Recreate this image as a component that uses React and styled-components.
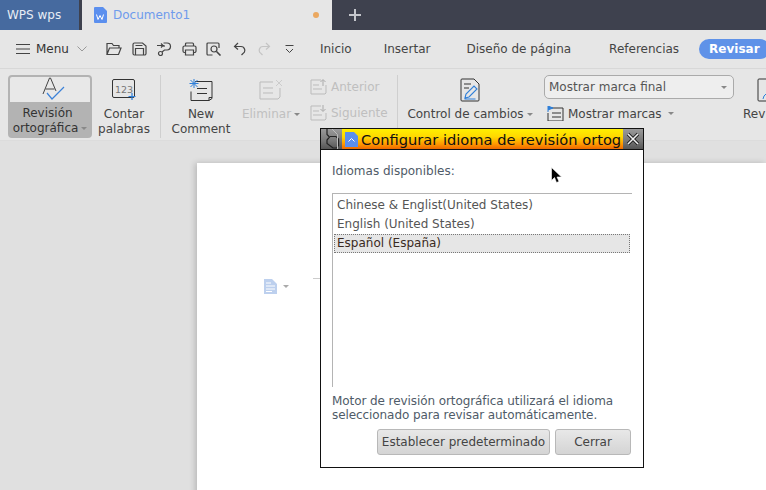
import React from 'react';
import styled, { createGlobalStyle } from 'styled-components';

const GlobalStyle = createGlobalStyle`
  html, body { margin: 0; padding: 0; background: #e0e0e0; }
  body { font-family: "DejaVu Sans", sans-serif; font-size: 12px; }
`;

const stroke = { fill: 'none', stroke: 'currentColor', strokeWidth: 1.2 };

const Icon = ({ w = 16, h = 16, children }) => (
  <svg width={w} height={h} viewBox={`0 0 ${w} ${h}`} style={{ display: 'block', flex: 'none' }}>
    {children}
  </svg>
);

export default function App() {
  return (
    <Screen>
      <GlobalStyle />
      <TabBar>
        <HomeTab>WPS wps</HomeTab>
        <DocTab>
          <Icon w={14} h={16}>
            <path d="M1 1a1 1 0 0 1 1-1h8l4 4v11a1 1 0 0 1-1 1H2a1 1 0 0 1-1-1z" fill="#5b8fee" />
            <path d="M3.500 7.500l1.500 5 2-4 2 4 1.500-5" fill="none" stroke="#fff" strokeWidth="1" />
          </Icon>
          <DocName>Documento1</DocName>
          <Dot />
        </DocTab>
        <PlusTab>
          <Icon w={14} h={14}>
            <path d="M7 1v12M1 7h12" stroke="#c4c6cc" strokeWidth="2" />
          </Icon>
        </PlusTab>
      </TabBar>

      <MenuBar>
        <Hamburger>
          <Icon w={14} h={12}>
            <path d="M0 1.500h14M0 6h14M0 10.500h14" stroke="#444" strokeWidth="1" />
          </Icon>
        </Hamburger>
        <MenuLabel>Menu</MenuLabel>
        <Icon w={10} h={6}>
          <path d="M.5.500L5 5 9.500.5" fill="none" stroke="#999" />
        </Icon>
        <MenuDivider />
        <QuickTools>
          <Tool>
            <Icon w={16} h={14}>
              <path d="M1 12.500V1.500h5l1.500 2H13v2.500M1 12.500L3.500 6H15l-2.500 6.500z" {...stroke} />
            </Icon>
          </Tool>
          <Tool>
            <Icon w={15} h={14}>
              <path d="M1 2.500a1.500 1.500 0 0 1 1.500-1.500h8l3.500 3v7.500a1.500 1.500 0 0 1-1.500 1.500h-10A1.500 1.500 0 0 1 1 11.500zM3.500 13V6.500h8V13M3.500 3.500h7" {...stroke} />
            </Icon>
          </Tool>
          <Tool>
            <Icon w={15} h={14}>
              <path d="M0 3.500h6M4 1.500l2 2-2 2M6.500 1h3.500a3.500 3.500 0 0 1 0 7H7.500L5 10M7 3v2" {...stroke} />
              <circle cx="3.500" cy="11.500" r="2" {...stroke} />
            </Icon>
          </Tool>
          <Tool>
            <Icon w={15} h={14}>
              <path d="M3.500 4V2a1 1 0 0 1 1-1h6a1 1 0 0 1 1 1v2M3.500 10.500H2.500A1.500 1.500 0 0 1 1 9V5.500A1.500 1.500 0 0 1 2.500 4h10A1.500 1.500 0 0 1 14 5.500V9a1.500 1.500 0 0 1-1.500 1.500h-1M3.500 8h8v5h-8z" {...stroke} />
            </Icon>
          </Tool>
          <Tool>
            <Icon w={16} h={14}>
              <path d="M6.500 13H2a1 1 0 0 1-1-1V2a1 1 0 0 1 1-1h10a1 1 0 0 1 1 1v4" {...stroke} />
              <circle cx="8" cy="7" r="3" {...stroke} />
              <path d="M10.500 9.500L14.500 13.500" {...stroke} strokeWidth="1.600" />
            </Icon>
          </Tool>
          <Tool>
            <Icon w={13} h={14}>
              <path d="M5 1L1.500 4.500 5 7.500M1.500 4.500H8a3.800 3.800 0 0 1 2 7l-1.500 1.500" {...stroke} />
            </Icon>
          </Tool>
          <Tool $off>
            <Icon w={13} h={14}>
              <path d="M8 1l3.500 3.500L8 7.500M11.500 4.500H5a3.800 3.800 0 0 0-2 7L4.500 13" {...stroke} />
            </Icon>
          </Tool>
          <Tool>
            <Icon w={9} h={9}>
              <path d="M.5.500h8M1 4l3.500 3.500L8 4" {...stroke} strokeWidth="1" />
            </Icon>
          </Tool>
        </QuickTools>
        <Nav>
          <NavItem>Inicio</NavItem>
          <NavItem $gap={32}>Insertar</NavItem>
          <NavItem $gap={36}>Diseño de página</NavItem>
          <NavItem $gap={38}>Referencias</NavItem>
          <ActiveNavItem>Revisar</ActiveNavItem>
        </Nav>
      </MenuBar>

      <Ribbon>
        <SpellButton>
          <SpellTop>
            <Icon w={24} h={24}>
              <path d="M1 17L7.500 1h1L14 14M3.500 12h9" fill="none" stroke="#444" strokeWidth="1" />
              <path d="M5 16l5 6L22 10" fill="none" stroke="#3c82d8" strokeWidth="1.200" />
            </Icon>
          </SpellTop>
          <SpellLabel>
            <SpellFirstLine>Revisión</SpellFirstLine>
            ortográfica<Caret />
          </SpellLabel>
        </SpellButton>

        <BigTool $w={64}>
          <BigIcon>
            <Icon w={24} h={22}>
              <rect x=".5" y=".5" width="22" height="18" rx="1.500" fill="none" stroke="#333" />
              <text x="3" y="14" fontSize="9.500" fill="#777" fontFamily="DejaVu Sans">123</text>
              <path d="M20 14v7M16.500 17.500h7" stroke="#2f7fd8" strokeWidth="1.200" />
            </Icon>
          </BigIcon>
          <BigLabel>Contar<br />palabras</BigLabel>
        </BigTool>

        <RibbonDivider />

        <BigTool $w={74}>
          <BigIcon>
            <Icon w={24} h={22}>
              <path d="M6 2.500h17v17l-3 2H2v-9M20 21.500v-3h3M8 9.500h10M8 14.500h10" fill="none" stroke="#333" />
              <path d="M5 0v9M.5 4.500h9M1.500 1l7 7M8.500 1l-7 7" stroke="#2f7fd8" strokeWidth="1" />
            </Icon>
          </BigIcon>
          <BigLabel>New<br />Comment</BigLabel>
        </BigTool>

        <BigTool $w={66} $off>
          <BigIcon>
            <Icon w={24} h={22}>
              <path d="M14 3H1v17h18l2-2V9M4 9h10M4 14h10" fill="none" stroke="#bbb" />
              <path d="M17 1l6 6M23 1l-6 6" stroke="#ccc" />
            </Icon>
          </BigIcon>
          <BigLabel>Eliminar<Caret /></BigLabel>
        </BigTool>

        <StackTools>
          <StackItem>
            <Icon w={17} h={16}>
              <path d="M11 1H1v14h14l1-1V6M3 6h6M3 10h9" fill="none" stroke="#bbb" />
              <path d="M13 7V1M10.500 3L13 .5 15.500 3" fill="none" stroke="#aaa" />
            </Icon>
            Anterior
          </StackItem>
          <StackItem>
            <Icon w={17} h={16}>
              <path d="M11 1H1v14h14l1-1V8M3 6h6M3 10h9" fill="none" stroke="#bbb" />
              <path d="M13 0v6M10.500 4L13 6.500 15.500 4" fill="none" stroke="#aaa" />
            </Icon>
            Siguiente
          </StackItem>
        </StackTools>

        <RibbonDivider />

        <BigTool $w={138}>
          <BigIcon>
            <Icon w={20} h={24}>
              <path d="M1 2a1 1 0 0 1 1-1h12l5 5v16a1 1 0 0 1-1 1H2a1 1 0 0 1-1-1zM4 6h7M4 10h5" fill="none" stroke="#333" />
              <path d="M5 20l1-4 8-8 3 3-8 8zM4.500 21h11" fill="none" stroke="#2f7fd8" strokeWidth="1.100" />
            </Icon>
          </BigIcon>
          <BigLabel>Control de cambios<Caret /></BigLabel>
        </BigTool>

        <MarkColumn>
          <MarkSelect>
            Mostrar marca final
            <SelectCaret />
          </MarkSelect>
          <MarksRow>
            <Icon w={17} h={15}>
              <path d="M4 2h12v13H1V7M5 7h9M5 11h9" fill="none" stroke="#333" />
              <path d="M1 6V0l5 2-5 2" fill="#2f7fd8" stroke="#2f7fd8" />
            </Icon>
            Mostrar marcas<MarksCaret />
          </MarksRow>
        </MarkColumn>

        <ClippedTool>
          <ClippedIcon>
            <Icon w={22} h={24}>
              <path d="M1 2a1 1 0 0 1 1-1h18v22H2a1 1 0 0 1-1-1z" fill="none" stroke="#333" />
              <path d="M6 21l1-3 6-6" fill="none" stroke="#2f7fd8" />
            </Icon>
          </ClippedIcon>
          <BigLabel>Rev</BigLabel>
        </ClippedTool>
      </Ribbon>

      <Workspace>
        <Page>
          <PageMark>
            <Icon w={13} h={15}>
              <path d="M0 0h8l5 5v10H0z" fill="#bdd0ee" />
              <path d="M2 4h5M2 7h9M2 10h9M2 12.500h6" stroke="#fff" strokeWidth="1" />
            </Icon>
            <PageCaret />
          </PageMark>
          <MarginTick />
        </Page>
      </Workspace>

      <Dialog>
        <TitleBar>
          <TitleGrip>
            <Icon w={21} h={20}>
              <path d="M6 0v5.500l2.500 2.500-2.500 3v3.500l6 4.500h3.500l2-2.500V10L15 7.500H9" fill="none" stroke="#222" strokeWidth="1.200" />
              <path d="M11 0l5.500 5.500V20" fill="none" stroke="#bdbdbd" strokeWidth="1" />
            </Icon>
          </TitleGrip>
          <TitleIcon>
            <Icon w={13} h={15}>
              <path d="M0 0h9l4 4v11H0z" fill="#5b8fee" />
              <path d="M3.500 9.500L6.500 6.500l3 3" fill="none" stroke="#fff" />
            </Icon>
          </TitleIcon>
          <TitleText>Configurar idioma de revisión ortog</TitleText>
          <CloseBox>
            <Icon w={14} h={14}>
              <path d="M2 2l10 10M12 2L2 12" stroke="#222" strokeWidth="3.400" />
              <path d="M2 2l10 10M12 2L2 12" stroke="#f2f2f2" strokeWidth="1.500" />
            </Icon>
          </CloseBox>
        </TitleBar>
        <DialogBody>
          <FieldLabel>Idiomas disponibles:</FieldLabel>
          <LangList>
            <LangItem>Chinese &amp; Englist(United States)</LangItem>
            <LangItem>English (United States)</LangItem>
            <LangItem $selected>Español (España)</LangItem>
          </LangList>
          <HelpText>
            Motor de revisión ortográfica utilizará el idioma<br />
            seleccionado para revisar automáticamente.
          </HelpText>
          <ButtonRow>
            <DialogButton $w={173}>Establecer predeterminado</DialogButton>
            <DialogButton $w={76}>Cerrar</DialogButton>
          </ButtonRow>
        </DialogBody>
      </Dialog>

      <Cursor>
        <svg width="11" height="17" viewBox="0 0 11 17" style={{ display: 'block' }}>
          <path d="M.5.500v13l3-3 2 5 2.500-1-2-4.500h4.500z" fill="#000" stroke="#fff" strokeWidth=".6" />
        </svg>
      </Cursor>
    </Screen>
  );
}

/// Page
const Screen = styled.div`
  position: relative;
  width: 766px;
  height: 490px;
  overflow: hidden;
  display: flex;
  flex-direction: column;
  background: #e0e0e0;
  color: #444;
`;

/// Title tabs
const TabBar = styled.div`
  display: flex;
  flex: none;
  height: 30px;
  background: #3e414e;
`;

const HomeTab = styled.div`
  width: 79px;
  padding-left: 7px;
  box-sizing: border-box;
  display: flex;
  align-items: center;
  background: #466a9f;
  color: #e8edf5;
  font-size: 12px;
`;

const DocTab = styled.div`
  width: 250px;
  margin-left: 3px;
  padding: 0 13px 0 11px;
  box-sizing: border-box;
  display: flex;
  align-items: center;
  gap: 6px;
  background: #e6e6e6;
`;

const DocName = styled.span`
  flex: 1;
  color: #6f9bec;
  font-size: 12px;
`;

const Dot = styled.span`
  width: 6px;
  height: 6px;
  border-radius: 50%;
  background: #eba860;
`;

const PlusTab = styled.div`
  width: 46px;
  display: flex;
  align-items: center;
  justify-content: center;
`;

/// Menu row
const MenuBar = styled.div`
  flex: none;
  height: 38px;
  padding-left: 16px;
  display: flex;
  align-items: center;
  background: #e6e6e6;
  border-bottom: 1px solid #d8d8d8;
`;

const Hamburger = styled.div`
  margin-right: 6px;
`;

const MenuLabel = styled.span`
  color: #333;
  margin-right: 8px;
`;

const MenuDivider = styled.div`
  width: 1px;
  height: 24px;
  margin: 0 10px 0 10px;
  background: #b5b5b5;
`;

const QuickTools = styled.div`
  display: flex;
  align-items: center;
  gap: 10px;
  color: #444;
`;

const Tool = styled.div`
  width: 15px;
  display: flex;
  justify-content: center;
  color: ${(p) => (p.$off ? '#c4c4c4' : '#444')};
`;

const Nav = styled.nav`
  margin-left: 23px;
  display: flex;
  align-items: center;
  white-space: nowrap;
`;

const NavItem = styled.span`
  margin-left: ${(p) => p.$gap || 0}px;
  color: #444;
`;

const ActiveNavItem = styled.span`
  margin-left: 20px;
  padding: 0 10px;
  height: 20px;
  line-height: 20px;
  border-radius: 10px;
  background: #5f92e8;
  color: #fff;
  font-weight: bold;
`;

/// Ribbon
const Ribbon = styled.div`
  flex: none;
  height: 71px;
  box-sizing: border-box;
  padding: 6px 0 0 8px;
  display: flex;
  background: #e6e6e6;
  white-space: nowrap;
`;

const SpellButton = styled.div`
  flex: none;
  width: 84px;
  height: 63px;
  box-sizing: border-box;
  border: 2px solid #b3b3b3;
  border-radius: 4px;
  background: #b3b3b3;
  display: flex;
  flex-direction: column;
`;

const SpellTop = styled.div`
  height: 27px;
  background: #e8e8e8;
  display: flex;
  justify-content: center;
  padding-left: 8px;
  border-radius: 2px 2px 0 0;
`;

const SpellLabel = styled.div`
  padding-top: 4px;
  text-align: center;
  line-height: 15px;
  color: #333;
`;

const SpellFirstLine = styled.div`
  padding-right: 5px;
`;

const BigTool = styled.div`
  flex: none;
  width: ${(p) => p.$w}px;
  display: flex;
  flex-direction: column;
  align-items: center;
  color: ${(p) => (p.$off ? '#c0c0c0' : '#444')};
`;

const ClippedTool = styled.div`
  flex: none;
  width: 22px;
  margin-left: -1px;
  color: #444;
`;

const BigIcon = styled.div`
  height: 27px;
  display: flex;
  align-items: center;
  padding-top: 1px;
`;

const ClippedIcon = styled(BigIcon)`
  padding-left: 14px;
`;

const BigLabel = styled.div`
  margin-top: 4px;
  text-align: center;
  line-height: 15px;
`;

const Caret = styled.span`
  display: inline-block;
  margin-left: 3px;
  vertical-align: middle;
  border: 3px solid transparent;
  border-top-color: #888;
  border-bottom: 0;
`;

const RibbonDivider = styled.div`
  flex: none;
  width: 1px;
  height: 63px;
  margin: 0 3px 0 4px;
  background: #cfcfcf;
`;

const StackTools = styled.div`
  flex: none;
  width: 89px;
  padding: 4px 0 0 6px;
  box-sizing: border-box;
  display: flex;
  flex-direction: column;
  gap: 10px;
`;

const StackItem = styled.div`
  display: flex;
  align-items: center;
  gap: 4px;
  color: #bfbfbf;
`;

const MarkColumn = styled.div`
  flex: none;
  width: 200px;
  margin-left: 5px;
  display: flex;
  flex-direction: column;
`;

const MarkSelect = styled.div`
  width: 190px;
  height: 24px;
  box-sizing: border-box;
  padding: 0 4px;
  display: flex;
  align-items: center;
  justify-content: space-between;
  border: 1px solid #aaa;
  border-radius: 5px;
  background: #eeeeee;
  color: #555;
`;

const SelectCaret = styled(Caret)`
  margin-right: 2px;
`;

const MarksRow = styled.div`
  margin: 7px 0 0 3px;
  display: flex;
  align-items: center;
  gap: 4px;
`;

const MarksCaret = styled(Caret)`
  margin-left: 2px;
`;

/// Document area
const Workspace = styled.div`
  flex: 1;
  padding: 22px 0 0 197px;
  background: #e0e0e0;
  border-top: 1px solid #dcdcdc;
`;

const Page = styled.div`
  position: relative;
  width: 569px;
  height: 340px;
  background: #fff;
  box-shadow: -2px 0 6px rgba(0, 0, 0, 0.18);
`;

const PageMark = styled.div`
  position: absolute;
  left: 67px;
  top: 116px;
  display: flex;
  align-items: center;
  gap: 6px;
`;

const PageCaret = styled(Caret)`
  margin: 0;
  border-top-color: #aaa;
`;

const MarginTick = styled.div`
  position: absolute;
  left: 116px;
  top: 115px;
  width: 8px;
  height: 1px;
  background: #ccc;
`;

/// Dialog window
const Dialog = styled.div`
  position: absolute;
  left: 320px;
  top: 128px;
  width: 324px;
  height: 340px;
  box-sizing: border-box;
  border: 1px solid #111;
  background: #fff;
  display: flex;
  flex-direction: column;
`;

const TitleBar = styled.div`
  flex: none;
  height: 20px;
  display: flex;
  align-items: center;
  background: linear-gradient(#fff000 0%, #ffd800 40%, #ff9800 75%, #ee6800 100%);
  border-bottom: 1px solid #111;
  overflow: hidden;
`;

const TitleGrip = styled.div`
  flex: none;
  width: 21px;
  height: 20px;
  background: linear-gradient(#9a9a9a, #777 60%, #555);
`;

const TitleIcon = styled.div`
  flex: none;
  margin: 0 3px;
`;

const TitleText = styled.div`
  flex: 1;
  min-width: 0;
  padding-top: 1px;
  color: #111;
  font-size: 14.65px;
  white-space: nowrap;
`;

const CloseBox = styled.div`
  flex: none;
  width: 20px;
  height: 20px;
  background: linear-gradient(#9a9a9a, #777 60%, #555);
  display: flex;
  align-items: center;
  justify-content: center;
`;

const DialogBody = styled.div`
  flex: 1;
  padding: 14px 11px 0;
  display: flex;
  flex-direction: column;
`;

const FieldLabel = styled.div`
  line-height: 15px;
  color: #4f5b68;
`;

const LangList = styled.div`
  height: 194px;
  margin-top: 14px;
  box-sizing: border-box;
  padding: 2px 2px 0 1px;
  border-top: 1px solid #b4b4b4;
  border-left: 1px solid #b4b4b4;
`;

const LangItem = styled.div`
  height: 19px;
  box-sizing: border-box;
  padding-left: 3px;
  line-height: 19px;
  color: #555;
  ${(p) =>
    p.$selected &&
    `
    background: #e6e6e6;
    outline: 1px dotted #777;
    outline-offset: -1px;
    color: #3a2a22;
  `}
`;

const HelpText = styled.div`
  margin-top: 7px;
  line-height: 14px;
  letter-spacing: -0.08px;
  color: #4f5b68;
`;

const ButtonRow = styled.div`
  margin-top: 7px;
  margin-right: 1px;
  display: flex;
  justify-content: flex-end;
  gap: 5px;
`;

const DialogButton = styled.div`
  width: ${(p) => p.$w}px;
  height: 26px;
  box-sizing: border-box;
  display: flex;
  align-items: center;
  justify-content: center;
  border: 1px solid #b8b8b8;
  border-radius: 3px;
  background: linear-gradient(#e8e8e8, #d4d4d4);
  color: #444;
`;

const Cursor = styled.div`
  position: absolute;
  left: 551px;
  top: 167px;
`;
